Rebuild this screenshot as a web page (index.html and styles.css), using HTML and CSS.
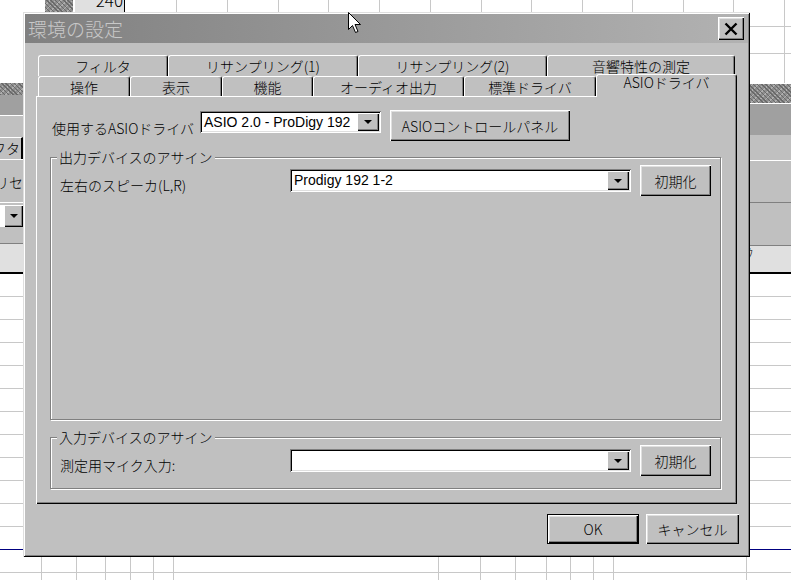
FILE: index.html
```html
<!DOCTYPE html>
<html lang="ja">
<head>
  <meta charset="UTF-8" />
  <title>環境の設定</title>
  <link rel="stylesheet" href="styles.css">
</head>
<body>
  <div class="desk">
    <div class="strip strip-left">
      <div class="sheet-top"></div>
      <div class="noise noise-left"></div>
      <div class="band-dark band-dark-left"></div>
      <div class="band band-a"></div>
      <div class="band band-tab"><span class="mini-tab">フタ</span></div>
      <div class="band band-text"><span class="clip-text">リセ</span></div>
      <div class="band band-combo"><span class="mini-field"></span><span class="mini-drop"><i class="arrow"></i></span></div>
      <div class="band band-b"></div>
      <div class="col-head col-head-left"></div>
      <div class="sheet-rows"></div>
    </div>

    <div class="strip strip-mid">
      <div class="cells-top">
        <span class="cell c22"></span>
        <span class="cell noise c28"></span>
        <span class="cell c2"></span>
        <span class="cell cell-value"><span class="value">240</span></span>
        <span class="cell line c52"></span>
        <span class="cell line c51"></span>
        <span class="cell line c51"></span>
        <span class="cell line c50"></span>
        <span class="cell line c51"></span>
        <span class="cell line c51"></span>
        <span class="cell line c51"></span>
        <span class="cell line c50"></span>
        <span class="cell line c51"></span>
        <span class="cell line c50"></span>
        <span class="cell line c51"></span>
        <span class="cell line c50"></span>
      </div>
      <div class="mid-fill"></div>
      <div class="cells-bottom">
        <span class="cell line b19"></span>
        <span class="cell line b35"></span>
        <span class="cell line b29"></span>
        <span class="cell line b25"></span>
        <span class="cell line b23"></span>
        <span class="cell line b20"></span>
        <span class="cell line b265"></span>
        <span class="cell line b42"></span>
        <span class="cell line b35"></span>
        <span class="cell line b31"></span>
        <span class="cell line b24"></span>
        <span class="cell line b23"></span>
        <span class="cell line b20"></span>
        <span class="cell line b133"></span>
      </div>
    </div>

    <div class="strip strip-right">
      <div class="sheet-top sheet-top-right"></div>
      <div class="noise noise-right"></div>
      <div class="band-dark band-dark-right"></div>
      <div class="band band-c"></div>
      <div class="band band-d"></div>
      <div class="band band-e"></div>
      <div class="col-head col-head-right"><span class="clip-char">ｸ</span></div>
      <div class="sheet-rows"></div>
    </div>
  </div>

  <div class="dialog">
    <div class="titlebar">
      <span class="title">環境の設定</span>
      <span class="close-btn">
        <svg width="14" height="14" viewBox="0 0 14 14"><path d="M1.5 1.5 L12.5 12.5 M12.5 1.5 L1.5 12.5" stroke="#000" stroke-width="2.4" fill="none"/></svg>
      </span>
    </div>

    <div class="dlg-body">
      <div class="tabrow tabrow-back">
        <div class="tab t130">フィルタ</div>
        <div class="tab t190">リサンプリング(1)</div>
        <div class="tab t189">リサンプリング(2)</div>
        <div class="tab t188">音響特性の測定</div>
      </div>
      <div class="tabrow tabrow-front">
        <div class="tab t92">操作</div>
        <div class="tab t92">表示</div>
        <div class="tab t91">機能</div>
        <div class="tab t151">オーディオ出力</div>
        <div class="tab t132">標準ドライバ</div>
        <div class="tab t141 active">ASIOドライバ</div>
      </div>

      <div class="panel">
        <div class="driver-row">
          <span class="lbl lbl-driver">使用するASIOドライバ</span>
          <div class="combo combo-driver">
            <span class="combo-text">ASIO 2.0 - ProDigy 192</span>
            <span class="drop"><i class="arrow"></i></span>
          </div>
          <button class="btn btn-cpl">ASIOコントロールパネル</button>
        </div>

        <div class="group group-out">
          <div class="legend">出力デバイスのアサイン</div>
          <div class="assign-row">
            <span class="lbl lbl-assign">左右のスピーカ(L,R)</span>
            <div class="combo combo-assign">
              <span class="combo-text">Prodigy 192 1-2</span>
              <span class="drop"><i class="arrow"></i></span>
            </div>
            <button class="btn btn-init">初期化</button>
          </div>
        </div>

        <div class="group group-in">
          <div class="legend">入力デバイスのアサイン</div>
          <div class="assign-row">
            <span class="lbl lbl-assign">測定用マイク入力:</span>
            <div class="combo combo-assign">
              <span class="combo-text"></span>
              <span class="drop"><i class="arrow"></i></span>
            </div>
            <button class="btn btn-init">初期化</button>
          </div>
        </div>
      </div>

      <div class="footer">
        <button class="btn btn-ok">OK</button>
        <button class="btn btn-cancel">キャンセル</button>
      </div>
    </div>
  </div>

  <svg class="pointer" width="14" height="22" viewBox="0 0 14 22">
    <path d="M0.5 0.5 L0.5 17.5 L4.5 13.5 L7.5 20.5 L10 19.5 L7 12.5 L12.5 12.5 Z" fill="#fff" stroke="#000" stroke-width="1"/>
  </svg>
</body>
</html>
```

FILE: styles.css
```css
* {
  margin: 0;
  padding: 0;
  box-sizing: border-box;
}
body {
  width: 791px;
  height: 580px;
  overflow: hidden;
  position: relative;
  background: #fff;
  color: #000;
  font-family: "Noto Sans CJK JP", "Liberation Sans", sans-serif;
  font-size: 14px;
  font-weight: 300;
}

/* background spreadsheet */
.desk {
  display: flex;
  height: 580px;
}
.strip {
  display: flex;
  flex-direction: column;
  overflow: hidden;
}
.strip-left { width: 23px; }
.strip-mid { width: 727px; }
.strip-right { width: 41px; }

.sheet-top {
  height: 83px;
  background: #fff;
}
.sheet-top-right {
  background:
    linear-gradient(#c8c8c8, #c8c8c8) 34px 0 / 1px 100% no-repeat,
    linear-gradient(#c8c8c8, #c8c8c8) 0 26px / 100% 1px no-repeat,
    linear-gradient(#c8c8c8, #c8c8c8) 0 53px / 100% 1px no-repeat,
    #fff;
}
.noise {
  background-color: #8e8e8e;
  background-image:
    repeating-linear-gradient(45deg, #6a6a6a 0 1px, transparent 1px 3px),
    repeating-linear-gradient(-45deg, #b0b0b0 0 1px, transparent 1px 4px);
}
.noise-left { height: 12px; }
.noise-right {
  height: 21px;
  border-top: 1px solid #fff;
  border-bottom: 1px solid #fff;
}
.band-dark { background: #a0a0a0; }
.band-dark-left { height: 20px; }
.band-dark-right { height: 31px; }
.band { background: #c0c0c0; }
.band-a { height: 22px; border-top: 1px solid #fff; }
.band-tab { height: 22px; display: flex; justify-content: flex-end; }
.mini-tab {
  flex: none;
  border-top: 1px solid #fff;
  border-right: 2px solid #000;
  line-height: 20px;
  padding-right: 1px;
  white-space: nowrap;
}
.band-text {
  height: 43px;
  border-top: 1px solid #fff;
  display: flex;
  justify-content: flex-end;
  align-items: center;
}
.clip-text {
  flex: none;
  white-space: nowrap;
  padding-top: 2px;
}
.band-combo {
  height: 27px;
  border-top: 1px solid #fff;
  display: flex;
  padding-top: 2px;
  padding-bottom: 2px;
}
.mini-field { width: 4px; background: #fff; }
.mini-drop {
  flex: 1;
  display: flex;
  align-items: center;
  justify-content: center;
  box-shadow: inset 1px 1px #fff, inset -1px -1px #000, inset -2px -2px #808080;
}
.band-b { height: 14px; }
.band-c { height: 25px; }
.band-d { height: 42px; border-top: 1px solid #fff; }
.band-e { height: 43px; border-top: 1px solid #808080; }
.col-head {
  background: #e0e0e0;
  border-top: 1px solid #808080;
  border-bottom: 2px solid #000;
}
.col-head-left { height: 31px; }
.col-head-right { height: 29px; }
.clip-char {
  display: block;
  margin-left: -3px;
  line-height: 14px;
  font-size: 12px;
}
.sheet-rows {
  flex: 1;
  background:
    linear-gradient(#000080, #000080) 0 275px / 100% 1px no-repeat,
    repeating-linear-gradient(to bottom, #fff 0 22px, #c8c8c8 22px 23px);
}

.cells-top {
  height: 12px;
  display: flex;
}
.cells-bottom {
  height: 23px;
  display: flex;
  background: linear-gradient(#c8c8c8, #c8c8c8) 0 15px / 100% 1px no-repeat, #fff;
}
.mid-fill { flex: 1; background: #c0c0c0; }
.cell { flex: none; height: 100%; }
.cell.line { border-right: 1px solid #c8c8c8; }
.c2 { width: 2px; }
.c22 { width: 22px; }
.c28 { width: 28px; }
.c50 { width: 50px; }
.c51 { width: 51px; }
.c52 { width: 52px; }
.cell-value {
  width: 50px;
  background: #e0e0e0;
  border-right: 1px solid #000;
  overflow: hidden;
  text-align: right;
}
.value {
  display: block;
  font-size: 17px;
  line-height: 17px;
  margin-top: -9px;
  padding-right: 1px;
}
.b19 { width: 19px; }
.b20 { width: 20px; }
.b23 { width: 23px; }
.b24 { width: 24px; }
.b25 { width: 25px; }
.b29 { width: 29px; }
.b31 { width: 31px; }
.b35 { width: 35px; }
.b42 { width: 42px; }
.b133 { width: 133px; }
.b265 { width: 265px; }

/* dialog window */
.dialog {
  position: absolute;
  left: 23px;
  top: 12px;
  width: 727px;
  height: 545px;
  background: #c0c0c0;
  padding: 2px;
  display: flex;
  flex-direction: column;
  box-shadow: inset 1px 1px #dfdfdf, inset -1px -1px #000, inset 2px 2px #fff, inset -2px -2px #808080;
}
.titlebar {
  height: 29px;
  flex: none;
  display: flex;
  align-items: center;
  justify-content: space-between;
  padding: 0 4px 0 3px;
  background: linear-gradient(to right, #808080, #b2b2b2);
}
.title {
  color: #c8c8c8;
  font-size: 19px;
  line-height: 20px;
}
.close-btn {
  width: 26px;
  height: 23px;
  display: flex;
  align-items: center;
  justify-content: center;
  background: #c0c0c0;
  box-shadow: inset 1px 1px #fff, inset -1px -1px #000, inset -2px -2px #808080, inset 2px 2px #dfdfdf;
}

.dlg-body {
  flex: 1;
  display: flex;
  flex-direction: column;
  padding: 12px 11px 0 11px;
}

/* tabs */
.tabrow {
  display: flex;
  padding-left: 2px;
  flex: none;
}
.tabrow-back { height: 21px; }
.tabrow-front { height: 20px; align-items: flex-end; }
.tab {
  flex: none;
  height: 100%;
  background: #c0c0c0;
  border-top: 1px solid #fff;
  border-left: 1px solid #fff;
  border-right: 1px solid #000;
  box-shadow: inset -1px 0 #808080;
  border-radius: 3px 3px 0 0;
  text-align: center;
  line-height: 18px;
  padding-top: 1px;
  white-space: nowrap;
}
.tab.active {
  height: 23px;
  margin-bottom: -1px;
  position: relative;
  z-index: 1;
  line-height: 15px;
  padding-top: 0;
}
.t91 { width: 91px; }
.t92 { width: 92px; }
.t130 { width: 130px; }
.t132 { width: 132px; }
.t141 { width: 141px; }
.t151 { width: 151px; }
.t188 { width: 188px; }
.t189 { width: 189px; }
.t190 { width: 190px; }

/* tab page */
.panel {
  height: 408px;
  flex: none;
  padding: 14px 16px 0 14px;
  box-shadow: inset 1px 1px #fff, inset -1px -1px #000, inset -2px -2px #808080;
}
.driver-row {
  display: flex;
  align-items: flex-start;
  height: 31px;
  padding-left: 2px;
}
.lbl {
  flex: none;
  line-height: 16px;
  white-space: nowrap;
}
.lbl-driver {
  width: 148px;
  padding-top: 10px;
}
.combo {
  flex: none;
  display: flex;
  background: #fff;
  padding: 2px;
  box-shadow: inset 1px 1px #808080, inset -1px -1px #fff, inset 2px 2px #000, inset -2px -2px #dfdfdf;
}
.combo-text {
  flex: 1;
  font-family: "Liberation Sans", "Noto Sans CJK JP", sans-serif;
  font-weight: 400;
  font-size: 14px;
  line-height: 18px;
  padding-left: 2px;
  white-space: nowrap;
  overflow: hidden;
}
.drop {
  width: 22px;
  flex: none;
  display: flex;
  align-items: center;
  justify-content: center;
  background: #c0c0c0;
  box-shadow: inset 1px 1px #fff, inset -1px -1px #000, inset -2px -2px #808080;
}
.arrow {
  display: block;
  border-left: 4px solid transparent;
  border-right: 4px solid transparent;
  border-top: 4px solid #000;
}
.combo-driver {
  width: 181px;
  height: 22px;
  margin-top: 1px;
}
.btn {
  flex: none;
  background: #c0c0c0;
  border: none;
  font-family: inherit;
  font-weight: inherit;
  font-size: 14px;
  color: #000;
  box-shadow: inset 1px 1px #fff, inset -1px -1px #000, inset -2px -2px #808080, inset 2px 2px #dfdfdf;
}
.btn-cpl {
  width: 180px;
  height: 31px;
  margin-left: 9px;
}

.group {
  border: 1px solid #808080;
  box-shadow: 1px 1px 0 #fff, inset 1px 1px 0 #fff;
}
.group-out {
  height: 263px;
  margin-top: 16px;
}
.group-in {
  height: 52px;
  margin-top: 17px;
}
.legend {
  width: fit-content;
  height: 14px;
  line-height: 14px;
  margin: -8px 0 0 6px;
  padding: 0 2px;
  background: #c0c0c0;
  white-space: nowrap;
}
.assign-row {
  display: flex;
  align-items: center;
  height: 31px;
  margin-top: 1px;
  padding-left: 9px;
}
.lbl-assign {
  width: 230px;
  align-self: flex-start;
  padding-top: 12px;
}
.combo-assign {
  width: 341px;
  height: 23px;
}
.btn-init {
  width: 71px;
  height: 31px;
  margin-left: 9px;
}

.footer {
  display: flex;
  justify-content: flex-end;
  gap: 7px;
  margin-top: 10px;
  margin-right: -2px;
}
.btn-ok {
  width: 92px;
  height: 30px;
  border: 1px solid #000;
}
.btn-cancel {
  width: 93px;
  height: 30px;
}

.pointer {
  position: absolute;
  left: 348px;
  top: 12px;
}
```
